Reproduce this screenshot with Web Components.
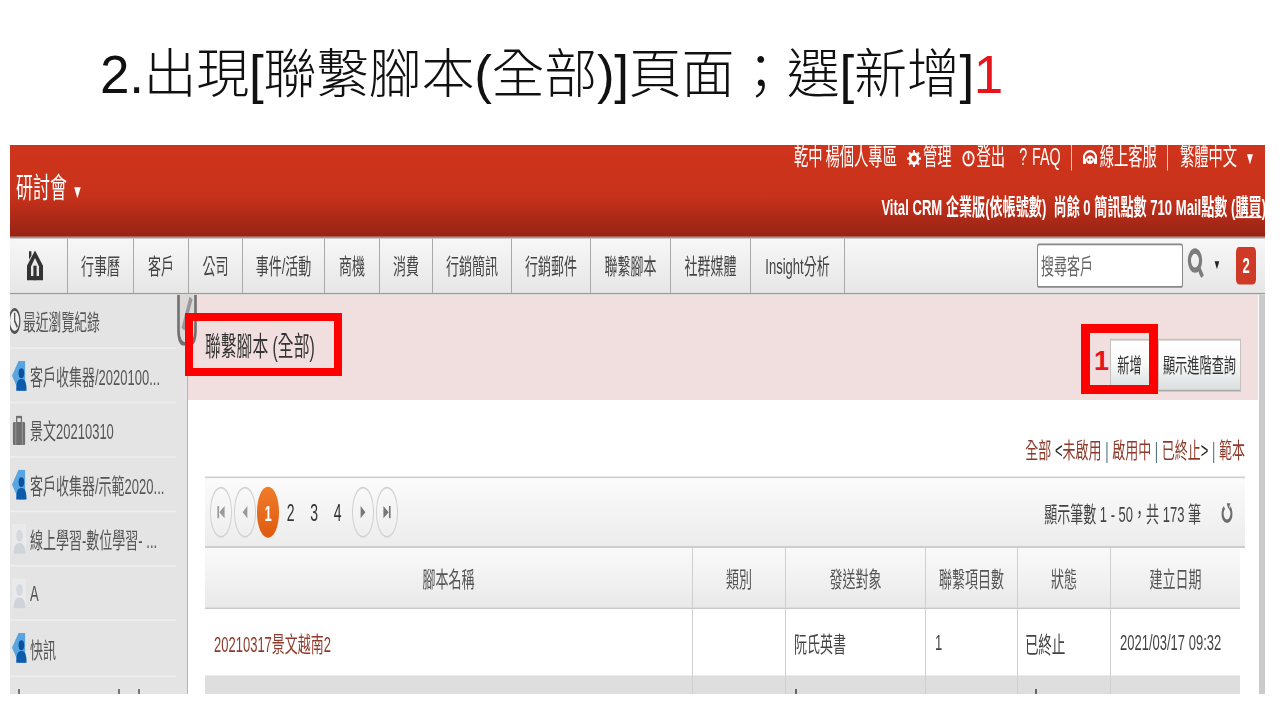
<!DOCTYPE html>
<html lang="zh-Hant">
<head>
<meta charset="utf-8">
<title>聯繫腳本</title>
<style>
  html, body { margin: 0; background: #fff; }
  body { --sy: 1.7; font-family: "Liberation Sans", "Noto Sans CJK TC", sans-serif; }
</style>
</head>
<body>
<crm-slide>
  <span slot="title">2.出現[聯繫腳本(全部)]頁面；選[新增]<b>1</b></span>
  <crm-app>
    <crm-header></crm-header>
    <crm-nav></crm-nav>
    <crm-body></crm-body>
  </crm-app>
</crm-slide>

<script>
const ICONS = {
    person: `<svg viewBox="0 0 16 18" preserveAspectRatio="none"><path d="M0 9 L7 0 H14 V18 H7 Z" fill="#58a5e2"/><circle cx="10" cy="7.5" r="3" fill="#0d4f9c"/><path d="M4.5 18 C4.5 12 7 11 10 11 S15.5 12 15.5 18 Z" fill="#0d5cab"/></svg>`,
    gray: `<svg viewBox="0 0 16 18" preserveAspectRatio="none"><rect width="15" height="18" fill="#e9eaec"/><circle cx="8" cy="7" r="3.6" fill="#d5d8dd"/><path d="M1.5 18 C2 12.5 5 11.5 8 11.5 S14 12.5 14.5 18 Z" fill="#cfd3da"/></svg>`,
    bag: `<svg viewBox="0 0 16 18" preserveAspectRatio="none"><rect x="1" y="4" width="13" height="14" rx="1" fill="#6f6f6f"/><rect x="5" y="1" width="5" height="4" fill="none" stroke="#6f6f6f" stroke-width="1.4"/><path d="M4 4v14M11 4v14" stroke="#999" stroke-width="1"/></svg>`,
    clock: `<svg viewBox="0 0 14 14" preserveAspectRatio="none"><circle cx="5" cy="7" r="5.6" fill="#f0f0f0" stroke="#555" stroke-width="1.4"/><path d="M5 3v4l3 3" fill="none" stroke="#555" stroke-width="1.4"/></svg>`,
    home: `<svg viewBox="0 0 18 18" width="18" height="19"><path d="M9 .5 L17 9.5 V18 H1 V9.5 Z" fill="#333"/><path d="M3 6V1h2.4v2.6Z" fill="#333"/><path d="M9 5 L13 10 V15.5 H5 V10 Z" fill="#e8e8e8"/><rect x="7.4" y="9.5" width="3.2" height="8.5" fill="#333"/></svg>`,
    gear: `<svg viewBox="0 0 16 16" preserveAspectRatio="none" style="width:14px"><circle cx="8" cy="8" r="4.5" fill="none" stroke="#fff" stroke-width="3"/><path d="M8 0v3M8 13v3M0 8h3M13 8h3M2.3 2.3l2 2M11.7 11.7l2 2M13.7 2.3l-2 2M4.3 11.7l-2 2" stroke="#fff" stroke-width="2.2"/></svg>`,
    power: `<svg viewBox="0 0 16 16" preserveAspectRatio="none" style="width:13px"><circle cx="8" cy="8" r="6.4" fill="none" stroke="#fff" stroke-width="2"/><path d="M8 3v6" stroke="#fff" stroke-width="2"/></svg>`,
    headset: `<svg viewBox="0 0 16 16" preserveAspectRatio="none"><path d="M2 10V7a6 6 0 0 1 12 0v3" fill="none" stroke="#fff" stroke-width="2"/><circle cx="8" cy="9" r="4" fill="#fff"/><rect x="1" y="8" width="3" height="5" fill="#fff"/><rect x="12" y="8" width="3" height="5" fill="#fff"/><circle cx="6.5" cy="9" r="1" fill="#c9321a"/><circle cx="9.5" cy="9" r="1" fill="#c9321a"/></svg>`,
    search: `<svg viewBox="0 0 18 18" width="18" height="18"><circle cx="8" cy="8" r="5.6" fill="none" stroke="#7c7c7c" stroke-width="3.2"/><path d="M11.5 12 L15.5 17.5" stroke="#7c7c7c" stroke-width="3.2"/></svg>`,
    refresh: `<svg viewBox="0 0 14 14" width="12" height="13"><path d="M4 3.2 A5.2 5.2 0 1 0 10 3.2" fill="none" stroke="#6d6d6d" stroke-width="2.4"/><path d="M6.6 .3 L11 .3 L8.6 4.4Z" fill="#6d6d6d"/></svg>`,
    first: `<svg viewBox="0 0 10 10" width="12" height="12"><path d="M2 2h1.4v6H2zM8 2v6L3.6 5z" fill="#999"/></svg>`,
    prev: `<svg viewBox="0 0 10 10" width="12" height="12"><path d="M7 2v6L3 5z" fill="#999"/></svg>`,
    next: `<svg viewBox="0 0 10 10" width="12" height="12"><path d="M3 2v6l4-3z" fill="#777"/></svg>`,
    last: `<svg viewBox="0 0 10 10" width="12" height="12"><path d="M2 2v6l4.4-3zM6.6 2H8v6H6.6z" fill="#777"/></svg>`,
};

class CrmSlide extends HTMLElement {
    constructor() {
        super();
        this.attachShadow({ mode: "open" });
        this.shadowRoot.innerHTML = `
            <style>
                :host { display: block; position: relative; width: 1280px; height: 720px; overflow: hidden; background: #fff; }
                .title {
                    height: 145px;
                    padding-left: 100px;
                    display: flex;
                    align-items: center;
                    font-size: 53px;
                    font-weight: 300;
                    color: #111;
                    white-space: nowrap;
                    letter-spacing: -.3px;
                }
                ::slotted(span) { display: block; margin-top: -6px; }
                .mark { position: absolute; box-sizing: border-box; border: 8px solid #f00; }
                .one { position: absolute; left: 1094px; top: 345px; font: bold 27px/32px "Liberation Sans", sans-serif; color: #e8141b; }
            </style>
            <div class="title"><slot name="title"></slot></div>
            <slot></slot>
            <div class="mark" style="left:185px;top:313px;width:157px;height:63px"></div>
            <div class="mark" style="left:1081px;top:324px;width:77px;height:70px;border-width:9px"></div>
            <div class="one">1</div>
        `;
    }
}

class CrmApp extends HTMLElement {
    constructor() {
        super();
        this.attachShadow({ mode: "open" });
        this.shadowRoot.innerHTML = `
            <style>
                :host { display: block; margin-left: 10px; width: 1255px; height: 549px; overflow: hidden; }
                .inner {
                    width: 1255px;
                    height: calc(549px / var(--sy));
                    transform: scaleY(var(--sy));
                    transform-origin: 0 0;
                    filter: blur(.3px);
                    display: flex;
                    flex-direction: column;
                }
            </style>
            <div class="inner"><slot></slot></div>
        `;
    }
}

class CrmHeader extends HTMLElement {
    constructor() {
        super();
        this.attachShadow({ mode: "open" });
        this.shadowRoot.innerHTML = `
            <style>
                :host {
                    display: flex;
                    justify-content: space-between;
                    flex: none;
                    height: calc(92px / var(--sy));
                    overflow: hidden;
                    color: #fff;
                    background: linear-gradient(#d0341c, #c8321b 55%, #962314);
                }
                .brand { margin: calc(28px / var(--sy)) 0 0 6px; font-size: 17px; line-height: calc(34px / var(--sy)); white-space: nowrap; }
                .brand .caret { font-size: 11px; margin-left: 5px; }
                .caret { font-size: 10px; margin-left: 6px; }
                .right { display: flex; flex-direction: column; align-items: flex-end; }
                .top {
                    display: flex;
                    align-items: center;
                    gap: 10px;
                    height: calc(26px / var(--sy));
                    margin-right: 10px;
                    font-size: 14.3px;
                    line-height: 1;
                    white-space: nowrap;
                }
                .top svg { display: block; width: 16px; height: 10px; flex: none; }
                .top span { display: flex; align-items: center; gap: 2px; }
                .top .owner { gap: 3px; }
                .top .faq { gap: 5px; margin-left: 4px; }
                .top .lang { margin-left: 2px; }
                .top .lang .caret { margin-left: 6px; }
                .sep { width: 1px; height: 15px; background: #f0c9c0; }
                .plan { margin-top: calc(25px / var(--sy)); font-size: 13.1px; font-weight: bold; line-height: calc(24px / var(--sy)); white-space: nowrap; margin-right: -1px; }
                .plan u { text-underline-offset: 1px; }
            </style>
            <div class="brand">研討會<span class="caret">▼</span></div>
            <div class="right">
                <div class="top">
                    <span class="owner"><span>乾中</span><span>楊個人專區</span></span>
                    <span>${ICONS.gear}管理</span>
                    <span>${ICONS.power}登出</span>
                    <span class="faq"><span>?</span><span>FAQ</span></span>
                    <i class="sep"></i>
                    <span>${ICONS.headset}線上客服</span>
                    <i class="sep"></i>
                    <span class="lang">繁體中文<span class="caret">▼</span></span>
                </div>
                <div class="plan">Vital CRM 企業版(依帳號數)&nbsp; 尚餘 0 簡訊點數 710 Mail點數 (<u>購買</u>)</div>
            </div>
        `;
    }
}

class NavTab extends HTMLElement {
    constructor() {
        super();
        this.attachShadow({ mode: "open" });
        this.shadowRoot.innerHTML = `
            <style>
                :host {
                    display: flex;
                    align-items: center;
                    justify-content: center;
                    flex: none;
                    box-sizing: border-box;
                    height: 100%;
                    border-right: 1px solid #a9a9a9;
                    font-size: 13px;
                    color: #444;
                    white-space: nowrap;
                }
            </style>
            <slot></slot>
        `;
    }
}
customElements.define("nav-tab", NavTab);

class CrmNav extends HTMLElement {
    constructor() {
        super();
        this.attachShadow({ mode: "open" });
        const tabs = [["行事曆", 66], ["客戶", 55], ["公司", 54], ["事件/活動", 82], ["商機", 55], ["消費", 53], ["行銷簡訊", 79], ["行銷郵件", 79], ["聯繫腳本", 80], ["社群媒體", 80], ["Insight分析", 94]];
        this.shadowRoot.innerHTML = `
            <style>
                :host {
                    display: flex;
                    align-items: center;
                    flex: none;
                    box-sizing: border-box;
                    height: calc(57px / var(--sy));
                    border-top: calc(2px / var(--sy)) solid #9a9a9a;
                    border-bottom: calc(2px / var(--sy)) solid #9a9a9a;
                    background: linear-gradient(#f7f7f7, #e6e6e6);
                }
                nav-tab svg { display: block; margin-right: 8px; }
                .tools { margin-left: auto; display: flex; align-items: center; padding-right: 9px; }
                .search {
                    box-sizing: border-box;
                    width: 146px;
                    height: calc(44px / var(--sy));
                    border: 1px solid #888;
                    border-radius: 2px;
                    background: #fff;
                    padding-left: 3px;
                    display: flex;
                    align-items: center;
                    font-size: 13px;
                    color: #666;
                }
                .glass { margin: 1px 0 0 4px; display: block; }
                .drop { margin: 0 15px 0 8px; font-size: 8px; color: #222; }
                .badge {
                    width: 20px;
                    height: calc(38px / var(--sy));
                    border-radius: 3px;
                    background: #cf3a27;
                    color: #fff;
                    font-size: 13px;
                    font-weight: bold;
                    display: flex;
                    align-items: center;
                    justify-content: center;
                }
            </style>
            <nav-tab style="width:58px">${ICONS.home}</nav-tab>
            ${tabs.map(([t, w]) => `<nav-tab style="width:${w}px">${t}</nav-tab>`).join("")}
            <div class="tools">
                <div class="search">搜尋客戶</div>
                <span class="glass">${ICONS.search}</span>
                <span class="drop">▼</span>
                <div class="badge">2</div>
            </div>
        `;
    }
}

class SideItem extends HTMLElement {
    constructor() {
        super();
        this.attachShadow({ mode: "open" });
        const icon = ICONS[this.getAttribute("icon")] || "";
        this.shadowRoot.innerHTML = `
            <style>
                :host {
                    display: flex;
                    align-items: center;
                    gap: 3px;
                    flex: none;
                    box-sizing: border-box;
                    width: 166px;
                    height: calc(54.5px / var(--sy));
                    border-bottom: calc(2px / var(--sy)) solid #eeeeee;
                    font-size: 13px;
                    color: #555;
                    white-space: nowrap;
                    overflow: hidden;
                }
                svg { display: block; flex: none; width: 15px; height: 17.5px; }
                :host([icon=clock]) { gap: 0; font-size: 12.8px; }
                :host([icon=clock]) svg { width: 13px; height: 17px; }
                .text { overflow: hidden; text-overflow: ellipsis; }
            </style>
            ${icon}<span class="text"><slot></slot></span>
        `;
    }
}
customElements.define("side-item", SideItem);

class CrmSide extends HTMLElement {
    constructor() {
        super();
        this.attachShadow({ mode: "open" });
        this.shadowRoot.innerHTML = `
            <style>
                :host {
                    display: flex;
                    flex-direction: column;
                    flex: none;
                    box-sizing: border-box;
                    width: 178px;
                    height: 100%;
                    padding-top: calc(1px / var(--sy));
                    background: #e4e4e4;
                    border-right: 1px solid #b5b5b5;
                    overflow: hidden;
                }
                .peek { display: flex; padding: calc(13px / var(--sy)) 0 0 8px; }
                .peek i { width: 2px; height: 4px; background: #777; }
                .peek i:nth-child(2) { margin-left: 72px; width: 12px; height: 1px; margin-top: 3px; }
                .peek i:nth-child(3) { margin-left: 14px; }
                .peek i:nth-child(4) { margin-left: 18px; }
            </style>
            <side-item icon="clock">最近瀏覽紀錄</side-item>
            <side-item icon="person" style="padding-left:2px">客戶收集器/2020100...</side-item>
            <side-item icon="bag" style="padding-left:2px">景文20210310</side-item>
            <side-item icon="person" style="padding-left:2px">客戶收集器/示範2020...</side-item>
            <side-item icon="gray" style="padding-left:2px">線上學習-數位學習- ...</side-item>
            <side-item icon="gray" style="padding-left:2px">A</side-item>
            <side-item icon="person" style="padding-left:2px">快訊</side-item>
            <div class="peek"><i></i><i></i><i></i><i></i></div>
        `;
    }
}

class CrmBtn extends HTMLElement {
    constructor() {
        super();
        this.attachShadow({ mode: "open" });
        this.shadowRoot.innerHTML = `
            <style>
                :host {
                    display: flex;
                    align-items: center;
                    justify-content: center;
                    box-sizing: border-box;
                    height: calc(54px / var(--sy));
                    border: 1px solid #c7c0c0;
                    border-bottom-color: #aaa;
                    background: linear-gradient(#ffffff, #fafafa 45%, #d9dede);
                    font-size: 12.2px;
                    color: #333;
                    white-space: nowrap;
                }
            </style>
            <slot></slot>
        `;
    }
}

class CrmPanel extends HTMLElement {
    constructor() {
        super();
        this.attachShadow({ mode: "open" });
        this.shadowRoot.innerHTML = `
            <style>
                :host {
                    display: flex;
                    justify-content: space-between;
                    flex: none;
                    box-sizing: border-box;
                    height: calc(106px / var(--sy));
                    padding: 0 17px 0 17px;
                    background: #f1dfdf;
                }
                h1 {
                    margin: calc(38px / var(--sy)) 0 0;
                    font-size: 15.8px;
                    font-weight: normal;
                    line-height: calc(30px / var(--sy));
                    color: #333;
                    white-space: nowrap;
                }
                .btns { display: flex; gap: 1px; margin-top: calc(44px / var(--sy)); align-self: flex-start; }
            </style>
            <h1>聯繫腳本 (全部)</h1>
            <div class="btns">
                <crm-btn style="width:47px;padding-right:8px">新增</crm-btn>
                <crm-btn style="width:83px">顯示進階查詢</crm-btn>
            </div>
        `;
    }
}

class CrmPager extends HTMLElement {
    constructor() {
        super();
        this.attachShadow({ mode: "open" });
        this.shadowRoot.innerHTML = `
            <style>
                :host {
                    display: flex;
                    align-items: center;
                    flex: none;
                    box-sizing: border-box;
                    height: calc(71px / var(--sy));
                    margin: 0 13px 0 17px;
                    padding-left: 5px;
                    border-top: calc(3px / var(--sy)) solid #cfcfcf;
                    border-bottom: calc(3px / var(--sy)) solid #c4c4c4;
                    background: linear-gradient(#fbfbfb, #ececec);
                    font-size: 13px;
                    color: #444;
                }
                .c {
                    box-sizing: border-box;
                    flex: none;
                    width: 22px;
                    height: calc(50px / var(--sy));
                    margin-right: 2px;
                    border: 1px solid #d2d2d2;
                    border-radius: 50%;
                    display: flex;
                    align-items: center;
                    justify-content: center;
                }
                .c svg { display: block; }
                .prev { margin-right: 1px; }
                .cur { border: 0; background: linear-gradient(#f07c2a, #df5a10); color: #fff; font-weight: bold; margin-right: 0; }
                .n { width: 23.5px; text-align: center; font-size: 14px; color: #333; }
                .gap { width: 2px; }
                .count { margin-left: auto; white-space: nowrap; font-size: 13px; color: #444; }
                .re { margin: 0 12px 0 20px; display: block; }
                .re svg { display: block; }
            </style>
            <span class="c">${ICONS.first}</span>
            <span class="c prev">${ICONS.prev}</span>
            <span class="c cur">1</span>
            <span class="n">2</span><span class="n">3</span><span class="n">4</span><span class="gap"></span>
            <span class="c">${ICONS.next}</span>
            <span class="c">${ICONS.last}</span>
            <span class="count">顯示筆數 1 - 50，共 173 筆</span>
            <span class="re">${ICONS.refresh}</span>
        `;
    }
}

class CrmTable extends HTMLElement {
    constructor() {
        super();
        this.attachShadow({ mode: "open" });
        const heads = ["腳本名稱", "類別", "發送對象", "聯繫項目數", "狀態", "建立日期"];
        const row = ["<a>20210317景文越南2</a>", "", "阮氏英書", "1", "已終止", "2021/03/17 09:32"];
        this.shadowRoot.innerHTML = `
            <style>
                :host {
                    display: grid;
                    grid-template-columns: 488px 93px 140px 92px 93px 129px;
                    grid-template-rows: calc(62px / var(--sy)) calc(65px / var(--sy)) calc(40px / var(--sy));
                    flex: none;
                    width: 1035px;
                    margin-left: 17px;
                    font-size: 13px;
                    color: #444;
                }
                div { display: flex; align-items: center; box-sizing: border-box; border-right: 1px solid #cfcfcf; white-space: nowrap; min-width: 0; }
                .h {
                    justify-content: center;
                    background: linear-gradient(#fafafa, #e9e9e9);
                    border-bottom: calc(3px / var(--sy)) solid #c8c8c8;
                    color: #555;
                }
                .d { padding-left: 9px; background: #fff; }
                .d:nth-child(7) { padding-left: 7px; }
                .d:nth-child(10) { padding-left: 8px; }
                .d:nth-child(12) { padding-left: 7px; font-size: 13.6px; letter-spacing: -.25px; }
                .z { background: #dedede; align-items: flex-start; padding: calc(14px / var(--sy)) 0 0 9px; }
                .z i { width: 2px; height: 3px; background: #666; }
                a { color: #8e3a2b; }
                .last { border-right: 0; }
            </style>
            ${heads.map((h, i) => `<div class="h${i === 5 ? " last" : ""}">${h}</div>`).join("")}
            ${row.map((c, i) => `<div class="d${i === 5 ? " last" : ""}">${c}</div>`).join("")}
            <div class="z"></div><div class="z"></div><div class="z"><i></i></div><div class="z"></div><div class="z"><i style="margin-left:8px"></i></div><div class="z last"></div>
        `;
    }
}

class CrmBody extends HTMLElement {
    constructor() {
        super();
        this.attachShadow({ mode: "open" });
        this.shadowRoot.innerHTML = `
            <style>
                :host { display: flex; position: relative; flex: none; height: calc(400px / var(--sy)); overflow: hidden; background: #fff; }
                main { display: flex; flex-direction: column; flex: none; width: 1070px; height: 100%; overflow: hidden; }
                .filter {
                    flex: none;
                    box-sizing: border-box;
                    height: calc(77px / var(--sy));
                    padding: calc(40px / var(--sy)) 13px 0 0;
                    text-align: right;
                    font-size: 13px;
                    line-height: calc(24px / var(--sy));
                    color: #8e3a2b;
                    white-space: nowrap;
                }
                .filter b { font-weight: normal; color: #222; }
                .filter s { text-decoration: none; color: #4f7478; }
                .strip { flex: none; width: 6px; margin-left: 1px; background: #cbcbcb; }
                .handle { position: absolute; left: 167px; top: 0; display: block; width: 20px; height: calc(52px / var(--sy)); }
            </style>
            <crm-side></crm-side>
            <main>
                <crm-panel></crm-panel>
                <div class="filter">全部 <b>&lt;</b>未啟用 <s>|</s> 啟用中 <s>|</s> 已終止<b>&gt;</b> <s>|</s> 範本</div>
                <crm-pager></crm-pager>
                <crm-table></crm-table>
            </main>
            <div class="strip"></div>
            <svg class="handle" viewBox="0 0 20 30" preserveAspectRatio="none">
                <path d="M1.5 0 V21 Q1.5 29 10 29 Q18.5 29 18.5 21 V0" fill="#dcd8d8" stroke="#707070" stroke-width="2.6"/>
                <path d="M6 20 L14 2" stroke="#999" stroke-width="3.4"/>
            </svg>
        `;
    }
}

customElements.define("crm-slide", CrmSlide);
customElements.define("crm-app", CrmApp);
customElements.define("crm-header", CrmHeader);
customElements.define("crm-nav", CrmNav);
customElements.define("crm-side", CrmSide);
customElements.define("crm-btn", CrmBtn);
customElements.define("crm-panel", CrmPanel);
customElements.define("crm-pager", CrmPager);
customElements.define("crm-table", CrmTable);
customElements.define("crm-body", CrmBody);
</script>
<style>
  crm-slide b { font-weight: normal; color: #e8141b; }
</style>
</body>
</html>
